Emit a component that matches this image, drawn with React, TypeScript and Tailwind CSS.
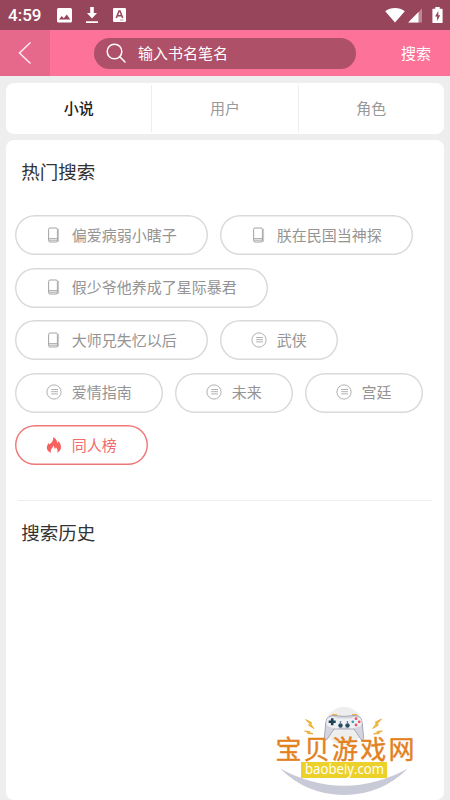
import type { ReactNode } from "react"

type TagKind = "book" | "list" | "hot"

const tagRows: { label: string; kind: TagKind }[][] = [
  [
    { label: "偏爱病弱小瞎子", kind: "book" },
    { label: "朕在民国当神探", kind: "book" },
  ],
  [{ label: "假少爷他养成了星际暴君", kind: "book" }],
  [
    { label: "大师兄失忆以后", kind: "book" },
    { label: "武侠", kind: "list" },
  ],
  [
    { label: "爱情指南", kind: "list" },
    { label: "未来", kind: "list" },
    { label: "宫廷", kind: "list" },
  ],
  [{ label: "同人榜", kind: "hot" }],
]

function BookIcon() {
  return (
    <svg className="h-4 w-4 shrink-0" viewBox="0 0 16 16" fill="none" stroke="#a3a3a3">
      <rect x="2.6" y="1" width="8.8" height="14" rx="1.4" strokeWidth="1" />
      <path d="M2.8 11.6h8.6M3 13.2h8.6" strokeWidth="0.9" />
      <path d="M11.6 2.2h1v12.2h-1.4" strokeWidth="0.8" stroke="#b5b5b5" />
    </svg>
  )
}

function ListIcon() {
  return (
    <svg className="h-4 w-4 shrink-0" viewBox="0 0 16 16" fill="none" stroke="#a8a8a8">
      <circle cx="8" cy="8" r="7.1" strokeWidth="0.9" />
      <path d="M5.2 5.5h6.800M5.200 7.700h6.800M5.200 9.900h6.800" strokeWidth="0.9" />
    </svg>
  )
}

function FlameIcon() {
  return (
    <svg className="h-4 w-4 shrink-0" viewBox="0 0 16 16" fill="#f7625f">
      <path d="M7.2 0.2C10 1.5 11.2 3.4 11.3 6.1c.8-.4 1.1-1.1 1.1-2.1 1.8 2 2.8 4.3 2.6 6.8-.2 2.3-1.6 4.1-3.8 4.9.8-2.2.1-4-1.3-5.5-.3 1-.7 1.5-1.3 1.8-.1-1.7-.6-2.8-1.5-3.6-.1 1.8-1.1 2.7-1.8 3.9-.6 1.1-.7 2.2-.1 3.5C2.4 14.9.7 13 .8 10.5c.1-1.800 1-2.900 1.600-4.500.5.5.8.9.9 1.500C5.900 5.700 7.500 3.300 7.200.2Z" />
    </svg>
  )
}

const icons: Record<TagKind, ReactNode> = {
  book: <BookIcon />,
  list: <ListIcon />,
  hot: <FlameIcon />,
}

function Tag({ label, kind }: { label: string; kind: TagKind }) {
  const tone =
    kind === "hot"
      ? "text-[#f26b6b] shadow-[inset_0_0_0_1.4px_#ee7777]"
      : "text-[#949494] shadow-[inset_0_0_0_1.4px_#d9d9d9]"
  return (
    <button className={`flex h-10 items-center gap-[9.5px] rounded-full pb-px pl-[31px] pr-[31.2px] text-[15px] whitespace-nowrap ${tone}`}>
      {icons[kind]}
      <span className="leading-5">{label}</span>
    </button>
  )
}

function StatusBar() {
  return (
    <div className="flex h-[30px] items-center bg-[#97455b] pl-2 pr-[7px] text-white">
      <span className="w-[49px] font-[Roboto] text-[17px] font-medium leading-none">4:59</span>
      <svg className="h-[15px] w-[15px]" viewBox="0 0 15 15">
        <rect width="15" height="14.5" rx="1.5" fill="#fff" />
        <path d="M2 11.5 4.8 8l2 2.3L9.8 6.5l3.5 5z" fill="#97455b" />
      </svg>
      <svg className="ml-[13px] h-[18px] w-[14px]" viewBox="0 0 14 18" fill="#fff">
        <path d="M5.200 1h3.600v6h3.200l-5 5.500L2 7h3.200zM1 15.200h12v1.700H1z" />
      </svg>
      <svg className="ml-[14px] h-[14px] w-[13px]" viewBox="0 0 13 14">
        <rect width="13" height="14" rx="1.2" fill="#fff" />
        <path d="M3.3 10 6 3h1l2.7 7M4.5 7.7h4" fill="none" stroke="#97455b" strokeWidth="1.5" />
        <path d="M7 12h3.5" stroke="#c99aa7" />
      </svg>
      <svg className="ml-auto h-4 w-5" viewBox="0 0 20 16" fill="#fff">
        <path d="M.2 4.2Q4.5 1 10 1t9.800 3.200L10 15.500z" />
      </svg>
      <svg className="ml-[3px] h-4 w-[15px]" viewBox="0 0 15 16">
        <path d="M14 1.5V15.5H.2z" fill="#bd8794" />
        <path d="M10.5 5V15.5H.2z" fill="#fff" />
      </svg>
      <svg className="ml-[9px] h-[18px] w-[11px]" viewBox="0 0 11 18">
        <path d="M3.3 1h4.400v1.800H10a.6.6 0 0 1 .6.6v13a.6.6 0 0 1-.6.6H1a.6.6 0 0 1-.6-.6v-13a.6.6 0 0 1 .6-.6h2.300z" fill="#fff" />
        <path d="M6.300 5 3 10.500h2.100V15L8.200 9.300H6.300z" fill="#97455b" />
      </svg>
    </div>
  )
}

function Header() {
  return (
    <header className="flex h-[46px] items-center bg-[#fc7299] text-white">
      <button className="flex h-full w-[50px] items-center justify-center bg-[#e6698b]">
        <svg className="h-6 w-4" viewBox="0 0 16 24" fill="none" stroke="#ffeaf0" strokeWidth="1.5">
          <path d="M13.5 1.500 2.500 12l11 10.500" />
        </svg>
      </button>
      <div className="ml-11 flex h-[31px] w-[262px] items-center rounded-full bg-[#ae5068] pl-3">
        <svg className="h-5 w-5" viewBox="0 0 20 20" fill="none" stroke="#fff" strokeWidth="1.5">
          <circle cx="8.5" cy="8.5" r="7.3" />
          <path d="m13.8 13.8 5.2 5.2" strokeLinecap="round" />
        </svg>
        <span className="ml-3 text-[15px] leading-5">输入书名笔名</span>
      </div>
      <button className="ml-auto mr-[19px] text-[15px] leading-5">搜索</button>
    </header>
  )
}

function Tabs() {
  return (
    <nav className="mt-[6.5px] flex h-[51px] items-center rounded-lg bg-white text-[15px] text-[#999]">
      <button className="flex-1 font-medium text-[#222]">小说</button>
      <button className="h-[47px] flex-1 border-x border-[#ededed]">用户</button>
      <button className="flex-1">角色</button>
    </nav>
  )
}

function SiteBadge() {
  return (
    <svg className="absolute bottom-0 right-0 h-[100px] w-[185px]" viewBox="0 0 185 100">
      <circle cx="79" cy="26" r="19" fill="#eeeeef" />
      <path d="M15 68.5Q79 103 143 68.5 116 95 79 95 42 95 15 68.500Z" fill="#c9cad8" />
      <path d="M67 14.800h5M87 14.800h5" stroke="#edb54c" strokeWidth="1.8" />
      <path d="M64 16.5q3-1.700 7-.8 8 1.400 16 0 4-.9 7 .8 3 1.500 3.300 7L98.600 37q.3 4-2.600 2.500L89 29H69l-7 10.500q-3 1.500-2.600-2.500l1.300-13.500q.3-5.500 3.300-7Z" fill="#d4d5df" stroke="#9899ab" strokeWidth=".8" />
      <path d="M63 18q5-2 9 .5h14q4-2.500 9-.5 3 4 .5 8-8 4-13 1.500h-7q-5 2.500-13-1.500-2.500-4 .5-8Z" fill="#f0f0f4" />
      <path d="M67.200 18.300v7M63.700 21.800h7" stroke="#1d4254" strokeWidth="2.6" />
      <g fill="#264e60">
        <circle cx="75.5" cy="25.5" r="2.2" />
        <circle cx="82.5" cy="25.5" r="2.2" />
        <circle cx="75.5" cy="22" r=".8" />
        <circle cx="82.5" cy="22" r=".8" />
      </g>
      <circle cx="91" cy="18.7" r="1.4" fill="#e45764" />
      <circle cx="91" cy="25" r="1.4" fill="#e45764" />
      <circle cx="87.8" cy="21.8" r="1.4" fill="#3a9eb8" />
      <circle cx="94.2" cy="21.8" r="1.4" fill="#e45764" />
      <g fill="#f4bd3b" stroke="#e6a72c" strokeWidth=".8">
        <path d="m40.500 19.500 6 3-.5 1.800 2.800 4.200-5-3 .6-2z" />
        <path d="m39.700 31 5.200.5-.3 1.100 3.500 1.300-5.500-.3.200-1.200z" />
        <path d="m116.500 19-6 3 .5 2-3.300 4.500 5.500-3.200-.5-2z" />
        <path d="m117.300 31-5.200.3.200 1.300-3.800 1.400 5.800-.4-.1-1.100z" />
      </g>
      <text x="10.5" y="58.5" textLength="139" fontSize="26" fill="#e3811e" stroke="#e3811e" strokeWidth=".4">
        宝贝游戏网
      </text>
      <rect x="36" y="62" width="86" height="16" fill="#ecd12b" />
      <text className="font-['Open_Sans',sans-serif]" x="40" y="74" textLength="79" lengthAdjust="spacingAndGlyphs" fontSize="14" fontWeight="500" fill="#fff">
        baobeiy.com
      </text>
    </svg>
  )
}

export default function App() {
  return (
    <div className="relative flex h-[800px] w-[450px] flex-col overflow-hidden bg-[#eee] font-['Noto_Sans_CJK_SC',sans-serif]">
      <StatusBar />
      <Header />
      <main className="flex flex-1 flex-col px-1.5">
        <Tabs />
        <section className="mt-[6.5px] flex-1 rounded-lg bg-white px-[9.3px] pt-[19.4px]">
          <h2 className="px-1.5 text-[18.5px] leading-6 text-[#333]">热门搜索</h2>
          <div className="mt-[32px] flex flex-col gap-[12.5px]">
            {tagRows.map((row) => (
              <div key={row[0].label} className="flex gap-[12.2px]">
                {row.map((tag) => (
                  <Tag key={tag.label} {...tag} />
                ))}
              </div>
            ))}
          </div>
          <hr className="mx-[3px] mt-[34.6px] border-[#ededed]" />
          <h2 className="mt-[19.4px] px-1.5 text-[18.5px] leading-6 text-[#333]">搜索历史</h2>
        </section>
      </main>
      <SiteBadge />
    </div>
  )
}
